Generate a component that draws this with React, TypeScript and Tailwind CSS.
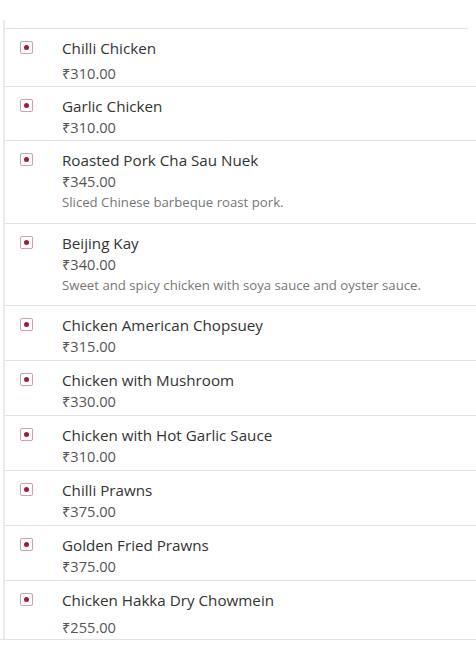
import React from "react";

type Item = { name: string; price: string; desc?: string; h: number; gap?: number };

const items: Item[] = [
  { name: "Chilli Chicken", price: "₹310.00", h: 59, gap: 4 },
  { name: "Garlic Chicken", price: "₹310.00", h: 54 },
  { name: "Roasted Pork Cha Sau Nuek", price: "₹345.00", desc: "Sliced Chinese barbeque roast pork.", h: 83 },
  { name: "Beijing Kay", price: "₹340.00", desc: "Sweet and spicy chicken with soya sauce and oyster sauce.", h: 82 },
  { name: "Chicken American Chopsuey", price: "₹315.00", h: 55 },
  { name: "Chicken with Mushroom", price: "₹330.00", h: 55 },
  { name: "Chicken with Hot Garlic Sauce", price: "₹310.00", h: 55 },
  { name: "Chilli Prawns", price: "₹375.00", h: 55 },
  { name: "Golden Fried Prawns", price: "₹375.00", h: 55 },
  { name: "Chicken Hakka Dry Chowmein", price: "₹255.00", h: 59, gap: 6 },
];

function VegIcon() {
  return (
    <div className="w-[13px] h-[13px] border border-[#cfa3ab] rounded-[2px] flex items-center justify-center shadow-[0_0_1px_#e8d5d8]">
      <div className="w-[5px] h-[5px] rounded-full bg-[#9c1d35]" />
    </div>
  );
}

export default function App() {
  return (
    <div
      className="w-[476px] h-[649px] bg-white overflow-hidden relative"
      style={{ fontFamily: '"Open Sans", "Noto Sans", sans-serif' }}
    >
      <div className="ml-[3px] mt-[20px] border-l-2 border-[#ececec]">
        <div className="h-[8px]" />
        <div className="border-t border-[#e3e3e3] mr-[8px]" />
        {items.map((it, i) => (
          <div
            key={i}
            className={`flex border-b border-[#e3e3e3] ${i === items.length - 1 ? "border-[#d6d6d6] -ml-[5px] pl-[5px]" : ""}`}
            style={{ height: i === 0 ? it.h - 1 : it.h }}
          >
            <div className="w-[57px] pl-[15px] pt-[12px]">
              <VegIcon />
            </div>
            <div className="flex flex-col pt-[8px]">
              <div className="text-[15.2px] leading-[22px] text-[#333333]">{it.name}</div>
              <div
                className="text-[14.6px] leading-[20px] text-[#555555]"
                style={{ marginTop: it.gap ?? 0 }}
              >
                {it.price}
              </div>
              {it.desc && (
                <div className="text-[13.2px] leading-[20px] text-[#777777] mt-[1px]">{it.desc}</div>
              )}
            </div>
          </div>
        ))}
      </div>
    </div>
  );
}
